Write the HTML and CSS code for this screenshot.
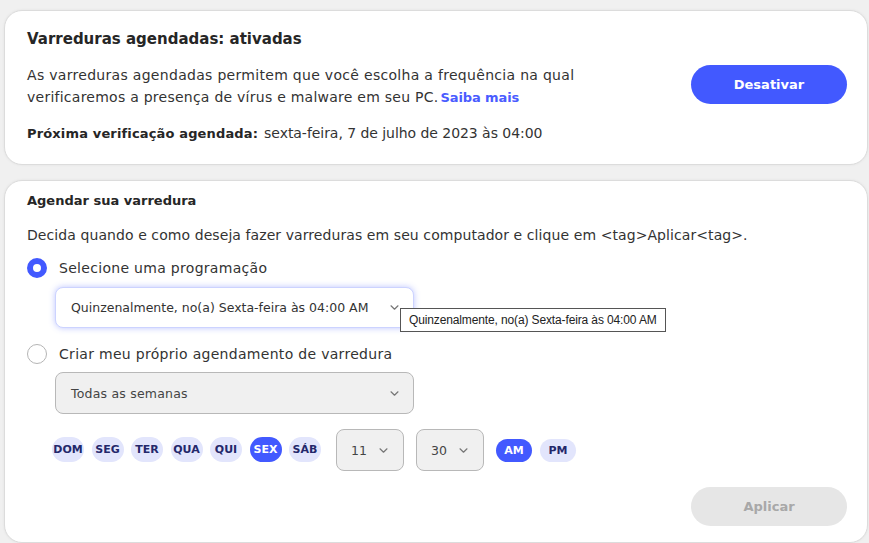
FILE: index.html
```html
<!DOCTYPE html>
<html lang="pt-BR">
<head>
<meta charset="utf-8">
<title>Varreduras agendadas</title>
<link rel="stylesheet" href="styles.css">
</head>
<body>
<div class="page">
  <section class="card status">
    <h2 class="card-title">Varreduras agendadas: ativadas</h2>
    <div class="status-row">
      <p class="desc"><span class="line">As varreduras agendadas permitem que você escolha a frequência na qual</span><span class="line second-line">verificaremos a presença de vírus e malware em seu PC.<a class="link">Saiba mais</a></span></p>
      <button class="btn-primary">Desativar</button>
    </div>
    <p class="next"><strong>Próxima verificação agendada:</strong><span class="next-value">sexta-feira, 7 de julho de 2023 às 04:00</span></p>
  </section>

  <section class="card schedule">
    <h3 class="sched-title">Agendar sua varredura</h3>
    <p class="intro">Decida quando e como deseja fazer varreduras em seu computador e clique em &lt;tag&gt;Aplicar&lt;tag&gt;.</p>

    <div class="radio-row first">
      <span class="radio checked"></span>
      <span>Selecione uma programação</span>
    </div>
    <div class="select-wrap first-select">
      <div class="select focused">
        <span>Quinzenalmente, no(a) Sexta-feira às 04:00 AM</span>
        <svg class="chev" width="9" height="5" viewBox="0 0 9 5"><path d="M1 0.8l3.5 3.4 3.5-3.4" fill="none" stroke="#777" stroke-width="1.2" stroke-linecap="round" stroke-linejoin="round"/></svg>
      </div>
      <div class="tooltip">Quinzenalmente, no(a) Sexta-feira às 04:00 AM</div>
    </div>

    <div class="radio-row second">
      <span class="radio"></span>
      <span>Criar meu próprio agendamento de varredura</span>
    </div>
    <div class="select-wrap second-select">
      <div class="select disabled">
        <span>Todas as semanas</span>
        <svg class="chev" width="9" height="5" viewBox="0 0 9 5"><path d="M1 0.8l3.5 3.4 3.5-3.4" fill="none" stroke="#777" stroke-width="1.2" stroke-linecap="round" stroke-linejoin="round"/></svg>
      </div>
    </div>

    <div class="days-row">
      <div class="days">
        <span class="pill">DOM</span>
        <span class="pill">SEG</span>
        <span class="pill">TER</span>
        <span class="pill">QUA</span>
        <span class="pill">QUI</span>
        <span class="pill active">SEX</span>
        <span class="pill">SÁB</span>
      </div>
      <div class="time-select first-time">
        <span>11</span>
        <svg class="chev" width="9" height="5" viewBox="0 0 9 5"><path d="M1 0.8l3.5 3.4 3.5-3.4" fill="none" stroke="#777" stroke-width="1.2" stroke-linecap="round" stroke-linejoin="round"/></svg>
      </div>
      <div class="time-select">
        <span>30</span>
        <svg class="chev" width="9" height="5" viewBox="0 0 9 5"><path d="M1 0.8l3.5 3.4 3.5-3.4" fill="none" stroke="#777" stroke-width="1.2" stroke-linecap="round" stroke-linejoin="round"/></svg>
      </div>
      <div class="ampm">
        <span class="pill-ap active">AM</span>
        <span class="pill-ap">PM</span>
      </div>
    </div>

    <div class="actions">
      <button class="btn-apply">Aplicar</button>
    </div>
  </section>
</div>
</body>
</html>
```

FILE: styles.css
```css
html, body {
  margin: 0;
  padding: 0;
}
body {
  background: #f0f0f0;
  font-family: "DejaVu Sans", sans-serif;
  color: #333;
  overflow: hidden;
}
.page {
  padding: 10px 1px 0 4px;
  display: flex;
  flex-direction: column;
  gap: 15px;
}
.card {
  background: #fff;
  border: 1px solid #dcdcdc;
  border-radius: 18px;
  box-shadow: 0 0 3px rgba(0, 0, 0, 0.06);
}

/* status card */
.status {
  padding: 18px 20px 19px 22px;
}
.card-title {
  margin: 0;
  font-size: 15px;
  font-weight: bold;
  line-height: 20px;
  color: #262626;
}
.status-row {
  display: flex;
  justify-content: space-between;
  align-items: flex-start;
  margin-top: 15px;
}
.desc {
  margin: 0;
  font-size: 14px;
  line-height: 22px;
  letter-spacing: 0.3px;
}
.desc .line {
  display: block;
  white-space: nowrap;
}
.desc .second-line {
  letter-spacing: 0.25px;
}
.link {
  color: #4a5cff;
  font-weight: bold;
  font-size: 13px;
  letter-spacing: -0.1px;
  margin-left: 2px;
  cursor: pointer;
}
.btn-primary {
  margin-top: 1px;
  width: 156px;
  height: 39px;
  border: none;
  border-radius: 20px;
  background: #4259ff;
  color: #fff;
  font-family: "DejaVu Sans", sans-serif;
  font-weight: bold;
  font-size: 13px;
}
.next {
  margin: 13px 0 0;
  font-size: 14px;
  line-height: 22px;
}
.next strong {
  font-size: 13px;
  letter-spacing: 0.15px;
  color: #262626;
}
.next-value {
  margin-left: 6px;
  letter-spacing: -0.05px;
}

/* schedule card */
.schedule {
  padding: 10px 20px 16px 22px;
}
.sched-title {
  margin: 0;
  font-size: 13px;
  font-weight: bold;
  line-height: 20px;
  color: #262626;
}
.intro {
  margin: 13px 0 0;
  font-size: 14px;
  line-height: 22px;
  letter-spacing: 0.08px;
}
.radio-row {
  display: flex;
  align-items: center;
  gap: 12px;
  height: 22px;
  font-size: 14px;
  letter-spacing: 0.3px;
}
.radio-row.first {
  margin-top: 11px;
}
.radio-row.second {
  margin-top: 15px;
}
.radio {
  width: 20px;
  height: 20px;
  box-sizing: border-box;
  border-radius: 50%;
  border: 1px solid #b5b5b5;
  background: #fff;
  flex: none;
}
.radio.checked {
  border: 6px solid #4259ff;
}
.select-wrap {
  position: relative;
  margin: 8px 0 0 28px;
  width: 359px;
}
.select-wrap.second-select {
  margin-top: 7px;
}
.select {
  height: 41px;
  box-sizing: border-box;
  border-radius: 8px;
  display: flex;
  align-items: center;
  justify-content: space-between;
  padding: 0 14px 0 15px;
  font-size: 12.5px;
  color: #333;
}
.select.focused {
  background: #fff;
  border: 1px solid #ccd3ff;
  box-shadow: 0 0 6px rgba(66, 89, 255, 0.35);
}
.select.disabled {
  height: 42px;
  background: #f0f0f0;
  border: 1px solid #b8b8b8;
  color: #444;
  letter-spacing: 0.2px;
}
.chev {
  flex: none;
}
.tooltip {
  position: absolute;
  left: 345px;
  top: 21px;
  height: 24px;
  box-sizing: border-box;
  padding: 0 8px;
  display: flex;
  align-items: center;
  white-space: nowrap;
  background: #fff;
  border: 1px solid #555;
  font-family: "Liberation Sans", Arial, sans-serif;
  font-size: 12px;
  letter-spacing: -0.13px;
  color: #222;
  z-index: 2;
}

.days-row {
  display: flex;
  align-items: center;
  margin: 15px 0 0 25px;
}
.days {
  display: flex;
  gap: 7.5px;
  margin-top: -2px;
}
.pill {
  width: 32px;
  height: 25px;
  border-radius: 13px;
  background: #e2e5fc;
  color: #24286b;
  font-size: 11px;
  font-weight: bold;
  display: flex;
  align-items: center;
  justify-content: center;
  white-space: nowrap;
}
.pill.active {
  background: #4259ff;
  color: #fff;
}
.time-select {
  width: 68px;
  height: 42px;
  box-sizing: border-box;
  margin-left: 12px;
  background: #f0f0f0;
  border: 1px solid #b8b8b8;
  border-radius: 8px;
  display: flex;
  align-items: center;
  justify-content: space-between;
  padding: 0 15px 0 14px;
  font-size: 12.5px;
  color: #444;
}
.time-select.first-time {
  margin-left: 15px;
}
.ampm {
  display: flex;
  gap: 8px;
  margin-left: 12px;
}
.pill-ap {
  width: 36px;
  height: 23px;
  border-radius: 12px;
  background: #e2e5fc;
  color: #24286b;
  font-size: 11px;
  font-weight: bold;
  display: flex;
  align-items: center;
  justify-content: center;
}
.pill-ap.active {
  background: #4259ff;
  color: #fff;
}
.actions {
  display: flex;
  justify-content: flex-end;
  margin-top: 16px;
}
.btn-apply {
  width: 156px;
  height: 39px;
  border: none;
  border-radius: 20px;
  background: #e6e6e6;
  color: #a8a8a8;
  font-family: "DejaVu Sans", sans-serif;
  font-weight: bold;
  font-size: 13px;
}
```
